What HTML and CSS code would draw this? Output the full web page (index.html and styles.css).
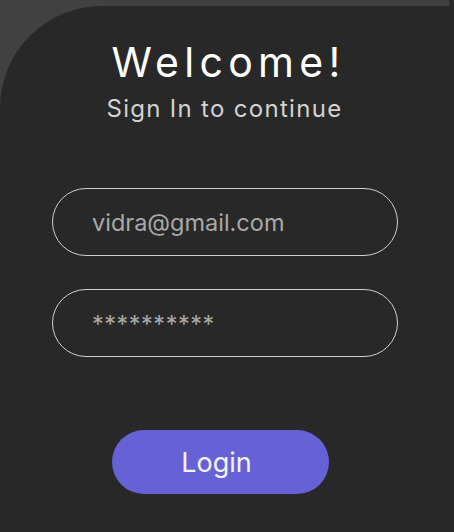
FILE: index.html
```html
<!DOCTYPE html>
<html>
<head>
<meta charset="utf-8">
<link rel="stylesheet" href="styles.css">
</head>
<body>
<div class="frame">
  <div class="card">
    <h1 class="title">Welcome!</h1>
    <p class="subtitle">Sign In to continue</p>
    <div class="field"><span class="value">vidra@gmail.com</span></div>
    <div class="field field-pass"><span class="value stars">**********</span></div>
    <button class="login">Login</button>
  </div>
</div>
</body>
</html>
```

FILE: styles.css
```css
html, body {
  margin: 0;
  padding: 0;
  width: 454px;
  height: 532px;
  overflow: hidden;
  background: #2a2a2a;
  font-family: "Inter", "Noto Sans", sans-serif;
}
.frame {
  width: 449px;
  height: 532px;
  background: #414141;
  padding-top: 6px;
  box-sizing: border-box;
}
.card {
  width: 454px;
  height: 526px;
  background: #282828;
  border-top-left-radius: 102px;
  display: flex;
  flex-direction: column;
  align-items: center;
}
.title {
  margin: 32px 0 0 0;
  color: #ffffff;
  font-size: 41px;
  font-weight: 400;
  letter-spacing: 5.3px;
  line-height: 48px;
  padding-left: 3px;
}
.subtitle {
  margin: 8px 0 0 0;
  color: #d2d2d2;
  font-size: 24px;
  letter-spacing: 1.3px;
  line-height: 30px;
  padding-right: 5px;
}
.field {
  margin-top: 64px;
  width: 346px;
  height: 68px;
  box-sizing: border-box;
  border: 1.2px solid #cfcfcf;
  border-radius: 34px;
  display: flex;
  align-items: center;
  padding-left: 39px;
  margin-right: 4px;
}
.field-pass {
  margin-top: 33px;
}
.value {
  color: #a9a9a9;
  font-size: 23.5px;
}
.stars {
  letter-spacing: 0.5px;
}
.login {
  margin-top: 73px;
  margin-right: 13px;
  width: 217px;
  height: 64px;
  border: none;
  border-radius: 32px;
  background: #6761d6;
  color: #f4f4f4;
  font-family: "Inter", "Noto Sans", sans-serif;
  font-size: 27px;
  padding: 0 8px 0 0;
}
```
